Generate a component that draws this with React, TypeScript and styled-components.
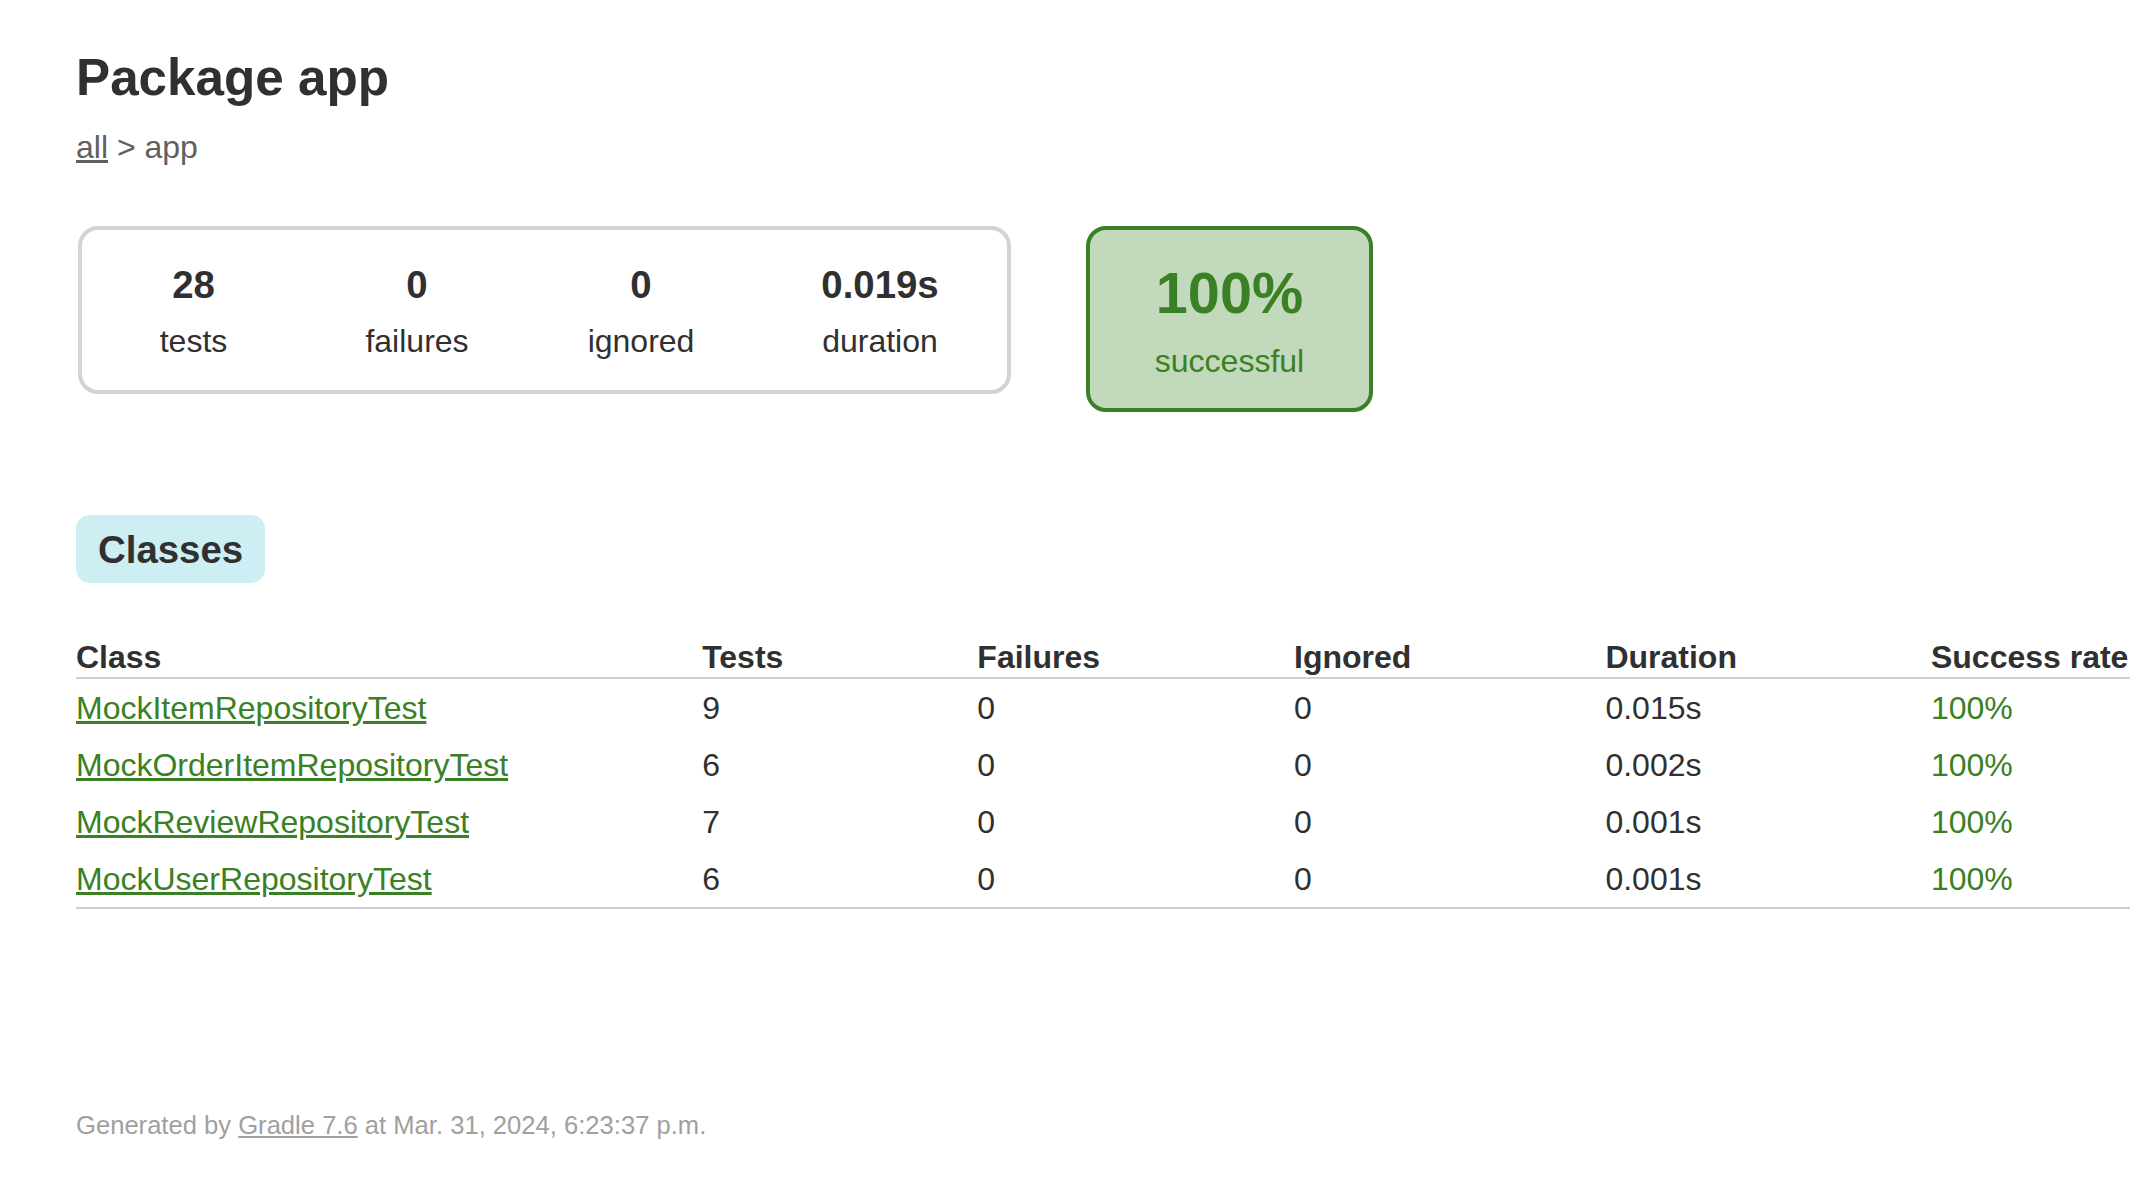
import React from "react";
import styled, { createGlobalStyle } from "styled-components";

const GREEN = "#3a8024";

const Global = createGlobalStyle`
  html, body {
    margin: 0;
    padding: 0;
    background: #ffffff;
  }
  body {
    font-family: "Liberation Sans", Arial, Helvetica, sans-serif;
    font-size: 32px;
    color: #303030;
  }
`;

const Content = styled.div`
  padding: 48px 0 40px 76px;
`;

const Title = styled.h1`
  font-size: 51.2px;
  font-weight: bold;
  margin: 0 0 22px;
  white-space: nowrap;
`;

const Breadcrumbs = styled.div`
  color: #606060;
  a {
    color: #606060;
    text-decoration: underline;
  }
`;

const SummaryRow = styled.div`
  display: flex;
  align-items: flex-start;
  gap: 75px;
  margin: 60px 0 0 2px;
`;

const SummaryGroup = styled.div`
  display: flex;
  border: 4px solid #d3d3d3;
  border-radius: 20px;
`;

const InfoBox = styled.div<{ $width: number }>`
  width: ${(p) => p.$width}px;
  padding: 33px 0 30px;
  text-align: center;
`;

const Counter = styled.div`
  font-size: 38.4px;
  font-weight: bold;
  margin-bottom: 16px;
`;

const Label = styled.p`
  margin: 0;
`;

const SuccessBox = styled.div`
  width: 279px;
  padding: 30px 0 28px;
  text-align: center;
  border: 4px solid ${GREEN};
  border-radius: 20px;
  background: #c3d9bc;
  color: ${GREEN};
`;

const Percent = styled.div`
  font-size: 57.6px;
  font-weight: bold;
  margin-bottom: 17px;
`;

const TabLinks = styled.div`
  display: flex;
  margin-top: 103px;
`;

const Tab = styled.div`
  padding: 11px 20px 9px;
  border: 2px solid #cdeef3;
  background: #cdeef3;
  border-radius: 14px;
`;

const TabTitle = styled.h2`
  margin: 0;
  font-size: 38.4px;
  font-weight: bold;
  white-space: nowrap;
`;

const Table = styled.table`
  margin-top: 55px;
  border-collapse: collapse;
  border-bottom: 2px solid #d0d0d0;
`;

const Th = styled.th`
  text-align: left;
  white-space: nowrap;
  font-weight: bold;
  padding: 1px 2px 1px 192px;
  border-bottom: 2px solid #d0d0d0;
  &:first-child {
    padding-left: 0;
  }
`;

const Td = styled.td<{ $success?: boolean }>`
  white-space: nowrap;
  padding: 11px 2px 9px 192px;
  color: ${(p) => (p.$success ? GREEN : "#303030")};
  &:first-child {
    padding-left: 0;
  }
`;

const ClassLink = styled.a`
  color: ${GREEN};
  text-decoration: underline;
`;

const Footer = styled.div`
  margin-top: 202px;
  font-size: 25.6px;
  color: #a0a0a0;
  white-space: nowrap;
  a {
    color: #a0a0a0;
    text-decoration: underline;
  }
`;

const stats = [
  { value: "28", label: "tests", width: 223 },
  { value: "0", label: "failures", width: 224 },
  { value: "0", label: "ignored", width: 224 },
  { value: "0.019s", label: "duration", width: 254 },
];

const rows = [
  { name: "MockItemRepositoryTest", tests: 9, duration: "0.015s" },
  { name: "MockOrderItemRepositoryTest", tests: 6, duration: "0.002s" },
  { name: "MockReviewRepositoryTest", tests: 7, duration: "0.001s" },
  { name: "MockUserRepositoryTest", tests: 6, duration: "0.001s" },
];

export default function App() {
  return (
    <>
      <Global />
      <Content>
        <Title>Package app</Title>
        <Breadcrumbs>
          <a href="#">all</a> &gt; app
        </Breadcrumbs>
        <SummaryRow>
          <SummaryGroup>
            {stats.map((s) => (
              <InfoBox key={s.label} $width={s.width}>
                <Counter>{s.value}</Counter>
                <Label>{s.label}</Label>
              </InfoBox>
            ))}
          </SummaryGroup>
          <SuccessBox>
            <Percent>100%</Percent>
            <Label>successful</Label>
          </SuccessBox>
        </SummaryRow>
        <TabLinks>
          <Tab>
            <TabTitle>Classes</TabTitle>
          </Tab>
        </TabLinks>
        <Table>
          <thead>
            <tr>
              <Th>Class</Th>
              <Th>Tests</Th>
              <Th>Failures</Th>
              <Th>Ignored</Th>
              <Th>Duration</Th>
              <Th>Success rate</Th>
            </tr>
          </thead>
          <tbody>
            {rows.map((r) => (
              <tr key={r.name}>
                <Td>
                  <ClassLink href="#">{r.name}</ClassLink>
                </Td>
                <Td>{r.tests}</Td>
                <Td>0</Td>
                <Td>0</Td>
                <Td>{r.duration}</Td>
                <Td $success>100%</Td>
              </tr>
            ))}
          </tbody>
        </Table>
        <Footer>
          Generated by <a href="#">Gradle 7.6</a> at Mar. 31, 2024, 6:23:37 p.m.
        </Footer>
      </Content>
    </>
  );
}
